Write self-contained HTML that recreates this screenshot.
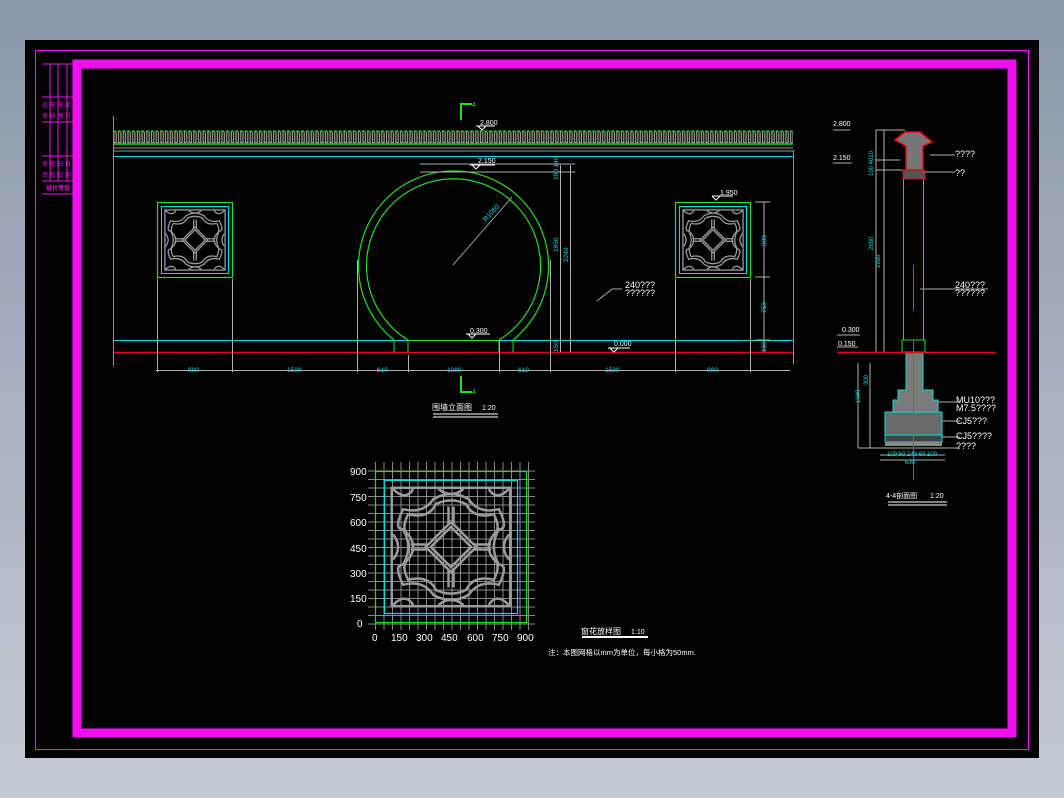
<!DOCTYPE html>
<html><head><meta charset="utf-8"><style>
html,body{margin:0;padding:0;width:1064px;height:798px;overflow:hidden;background:linear-gradient(#8b98aa,#c6cad4);}
svg{position:absolute;left:0;top:0}
text{font-family:"Liberation Sans","Noto Sans CJK SC",sans-serif}
</style></head><body>
<svg width="1064" height="798" viewBox="0 0 1064 798" xmlns="http://www.w3.org/2000/svg">
<defs>
<pattern id="tile" x="113" y="130" width="4.7" height="14" patternUnits="userSpaceOnUse">
<rect x="0" y="0.5" width="3" height="1.5" fill="#1ee01e"/>
<rect x="0.3" y="2" width="1.2" height="11" fill="#a0a0a0"/>
<rect x="2.6" y="2" width="1.2" height="11" fill="#a0a0a0"/>
<rect x="0.3" y="12" width="3.5" height="1" fill="#a0a0a0"/>
</pattern>
<symbol id="lat" viewBox="0 0 100 100">
<g fill="none" stroke="#9a9a9a" stroke-width="2">
<path d="M50 34 L66 50 L50 66 L34 50 Z"/><path d="M50 30 L70 50 L50 70 L30 50 Z"/>
<path d="M18 48H32M68 48H82M18 52H32M68 52H82M48 18V32M52 18V32M48 68V82M52 68V82"/>
<path d="M36 12 Q50 4 64 12 Q72 24 88 20 Q96 36 88 36 Q80 50 88 64 Q96 64 88 80 Q72 76 64 88 Q50 96 36 88 Q28 76 12 80 Q4 64 12 64 Q20 50 12 36 Q4 36 12 20 Q28 24 36 12Z"/>
<path d="M38 16 Q50 10 62 16 Q68 28 84 24 Q90 36 84 40 Q76 50 84 60 Q90 64 84 76 Q68 72 62 84 Q50 90 38 84 Q32 72 16 76 Q10 64 16 60 Q24 50 16 40 Q10 36 16 24 Q32 28 38 16Z"/>
<path d="M4 40 Q12 50 4 60M96 40 Q88 50 96 60M40 4 Q50 12 60 4M40 96 Q50 88 60 96M4 4 Q14 14 20 4M96 4 Q86 14 80 4M4 96 Q14 86 20 96M96 96 Q86 86 80 96"/>
<rect x="3" y="3" width="94" height="94"/>
</g>
</symbol>
</defs>
<rect x="25" y="40" width="1014" height="718" fill="#000"/>
<rect x="35.5" y="50.5" width="993" height="699" fill="none" stroke="#ee10ee" stroke-width="1"/>
<rect x="77" y="64" width="935" height="669" fill="none" stroke="#ee10ee" stroke-width="9"/>
<g stroke="#ee10ee" stroke-width="1">
<line x1="42" y1="64" x2="73" y2="64"/><line x1="42" y1="97" x2="73" y2="97"/><line x1="42" y1="122" x2="73" y2="122"/>
<line x1="42" y1="156" x2="73" y2="156"/><line x1="42" y1="181" x2="73" y2="181"/><line x1="42" y1="194" x2="73" y2="194"/>
<line x1="50" y1="64" x2="50" y2="181"/><line x1="58" y1="64" x2="58" y2="181"/><line x1="67" y1="64" x2="67" y2="181"/>
</g>
<g fill="#ee10ee" font-size="6"><text x="42" y="107">设 施 施 单</text><text x="42" y="118">审 核 图 号</text><text x="42" y="166">审 批 日 日</text><text x="42" y="177">审 批 日 期</text><text x="46" y="190" font-weight="bold">设计单位</text></g>

<rect x="113" y="130" width="680" height="14" fill="url(#tile)"/>
<line x1="113" y1="144" x2="793" y2="144" stroke="#1ee01e" stroke-width="1.5"/>
<line x1="113" y1="148" x2="793" y2="148" stroke="#9a9a9a"/>
<line x1="113" y1="151" x2="793" y2="151" stroke="#9a9a9a"/>
<line x1="113" y1="156.5" x2="793" y2="156.5" stroke="#00e0e0"/>
<line x1="113" y1="340.5" x2="793" y2="340.5" stroke="#00e0e0"/>
<line x1="113" y1="352.5" x2="793" y2="352.5" stroke="#f00010" stroke-width="1.5"/>
<line x1="113.5" y1="116" x2="113.5" y2="366" stroke="#1ee01e"/>
<line x1="793.5" y1="150" x2="793.5" y2="364" stroke="#1ee01e"/>
<path d="M394 340 A95 95 0 1 1 513 340" fill="none" stroke="#1ee01e" stroke-width="1.2"/>
<path d="M408 340 A87 87 0 1 1 499 340" fill="none" stroke="#1ee01e" stroke-width="1.2"/>
<path d="M394 340V352M408 340V352M499 340V352M513 340V352M408 340.5H499" stroke="#1ee01e"/>
<line x1="453" y1="265" x2="512" y2="197" stroke="#9a9a9a"/>
<text x="486" y="222" fill="#00e0e0" font-size="7" transform="rotate(-48 486 222)">R1050</text>
<rect x="157.5" y="202.5" width="75" height="75" fill="none" stroke="#1ee01e" stroke-width="1.2"/>
<rect x="161.5" y="206.5" width="67" height="67" fill="none" stroke="#00e0e0"/>
<use href="#lat" x="163" y="208" width="64" height="64"/>
<rect x="675.5" y="202.5" width="75" height="75" fill="none" stroke="#1ee01e" stroke-width="1.2"/>
<rect x="679.5" y="206.5" width="67" height="67" fill="none" stroke="#00e0e0"/>
<use href="#lat" x="681" y="208" width="64" height="64"/>
<g stroke="#b0b0b0" stroke-width="1">
<line x1="156" y1="370.5" x2="790" y2="370.5"/>
<path d="M157.5 279V372M232.5 279V372M357.5 260V372M408.5 355V372M499.5 340V372M550.5 260V372M675.5 279V372M750.5 279V372"/>
<path d="M560.5 165V352M570.5 165V352M764 202V352M755 202H770M755 277H770M755 340H770M420 164H575M420 172H575"/>
<line x1="597" y1="301" x2="612" y2="289"/><line x1="612" y1="289" x2="622" y2="289"/>
</g>
<g fill="#00e0e0" font-size="6.5">
<text x="188" y="372">900</text><text x="287" y="372">1500</text><text x="377" y="372">610</text><text x="447" y="372">1080</text><text x="518" y="372">610</text><text x="605" y="372">1500</text><text x="707" y="372">900</text>
<text transform="translate(558 252) rotate(-90)">1950</text><text transform="translate(568 262) rotate(-90)">2240</text>
<text transform="translate(558 180) rotate(-90)">100 140</text><text transform="translate(558 352) rotate(-90)">150</text>
<text transform="translate(766 246) rotate(-90)">900</text><text transform="translate(766 313) rotate(-90)">750</text><text transform="translate(766 352) rotate(-90)">150</text>
</g>
<g fill="#fff" font-size="7">
<text x="480" y="125">2.800</text><text x="478" y="163">2.150</text><text x="720" y="195">1.950</text><text x="470" y="333">0.300</text><text x="614" y="346">0.000</text>
<text x="625" y="288" font-size="9">240???</text><text x="625" y="296" font-size="9">??????</text>
</g>
<g fill="none" stroke="#fff"><path d="M476 126H495M478 126L482 130L486 126M470 165H495M472 165L476 169L480 165M712 196H733M712 196L716 200L720 196M466 334H490M468 334L472 338L476 334M608 348H630M610 348L614 352L618 348"/></g>
<path d="M461 120V104H472" stroke="#1ee01e" stroke-width="2" fill="none"/><text x="472" y="107" fill="#1ee01e" font-size="7">4</text>
<path d="M461 376V392H472" stroke="#1ee01e" stroke-width="2" fill="none"/><text x="472" y="394" fill="#1ee01e" font-size="7">4</text>
<text x="432" y="410" fill="#fff" font-size="8">围墙立面图</text><text x="482" y="410" fill="#fff" font-size="7">1:20</text>
<path d="M433 414H498M433 417H498" stroke="#fff"/>

<g stroke="#b0b0b0" fill="none">
<path d="M833 130H850M833 163H852M837 335H860M837 347H858M876 130V352M884 130V352M876 130H905M876 160H900M876 170H905M858 363V448M870 363V448M858 448H945"/>
<path d="M920 289H988M930 155H955M920 172H955M930 402H960M930 421H960M930 437H960M930 448H960M880 455H945M880 460H945"/>
</g>
<path d="M895 140L905 132H920L932 142L923 146V170H906V146Z" fill="#777" stroke="#f00010" stroke-width="1.5"/>
<rect x="903" y="170" width="22" height="9" fill="#555" stroke="#f00010" stroke-width="1"/>
<path d="M903.5 179V340M923.5 179V340" stroke="#1ee01e"/>
<rect x="902" y="340" width="23" height="12" fill="none" stroke="#1ee01e"/>
<path d="M906 352V390H898V400H893V412H938V400H933V390H923V352Z" fill="#7a7a7a" stroke="#00e0e0"/>
<rect x="885" y="412" width="57" height="23" fill="#6a6a6a" stroke="#00e0e0"/>
<rect x="885" y="435" width="57" height="7" fill="#444" stroke="#00e0e0"/>
<rect x="885" y="442" width="57" height="4" fill="#888"/>
<path d="M913.5 265V310M913.5 340V480" stroke="#ee10ee"/>
<line x1="837" y1="352.5" x2="996" y2="352.5" stroke="#f00010" stroke-width="1.5"/>
<g fill="#fff" font-size="7"><text x="833" y="126">2.800</text><text x="833" y="160">2.150</text><text x="842" y="332">0.300</text><text x="838" y="346">0.150</text></g>
<g fill="#fff" font-size="9"><text x="955" y="157">????</text><text x="955" y="176">??</text><text x="955" y="288">240???</text><text x="955" y="296">??????</text>
<text x="956" y="403">MU10???</text><text x="956" y="411">M7.5????</text><text x="956" y="424">CJ5???</text><text x="956" y="439">CJ5????</text><text x="956" y="449">????</text></g>
<g fill="#00e0e0" font-size="6"><text transform="translate(880 268) rotate(-90)">1950</text><text transform="translate(873 250) rotate(-90)">2650</text><text transform="translate(873 176) rotate(-90)">100 4010</text>
<text transform="translate(868 385) rotate(-90)">300</text><text transform="translate(860 403) rotate(-90)">1040</text><text x="887" y="456">100 60 240 60 100</text><text x="905" y="464">630</text></g>
<text x="886" y="498" fill="#fff" font-size="7">4-4剖面图</text><text x="930" y="498" fill="#fff" font-size="7">1:20</text>
<path d="M888 502H947M888 505H947" stroke="#fff"/>

<g stroke="#8a8a8a" stroke-width="1">
<path d="M375.5 462V630M384 462V630M392.5 462V630M401 462V630M409.5 462V630M418 462V630M426.5 462V630M435 462V630M443.5 462V630M452 462V630M460.5 462V630M469 462V630M477.5 462V630M486 462V630M494.5 462V630M503 462V630M511.5 462V630M520 462V630M528.5 462V630"/>
<path d="M368 471H535M368 479.5H535M368 488H535M368 496.5H535M368 505H535M368 513.5H535M368 522H535M368 530.5H535M368 539H535M368 547.5H535M368 556H535M368 564.5H535M368 573H535M368 581.5H535M368 590H535M368 598.5H535M368 607H535M368 615.5H535M368 624H535"/>
</g>
<rect x="375.5" y="471.5" width="151" height="151" fill="none" stroke="#1ee01e" stroke-width="1.2"/>
<rect x="384.5" y="480.5" width="133" height="133" fill="none" stroke="#00e0e0" stroke-width="1.2"/>
<use href="#lat" x="388" y="484" width="126" height="126"/>
<g fill="#fff" font-size="10"><text x="350" y="475">900</text><text x="350" y="501">750</text><text x="350" y="526">600</text><text x="350" y="552">450</text><text x="350" y="577">300</text><text x="350" y="602">150</text><text x="357" y="627">0</text>
<text x="372" y="641">0</text><text x="391" y="641">150</text><text x="416" y="641">300</text><text x="441" y="641">450</text><text x="467" y="641">600</text><text x="492" y="641">750</text><text x="517" y="641">900</text></g>
<text x="581" y="634" fill="#fff" font-size="8">窗花放样图</text><text x="631" y="634" fill="#fff" font-size="7">1:10</text>
<rect x="582" y="636" width="66" height="2" fill="#fff"/>
<text x="548" y="655" fill="#fff" font-size="7.5">注：本图网格以mm为单位，每小格为50mm.</text>
</svg>
</body></html>
